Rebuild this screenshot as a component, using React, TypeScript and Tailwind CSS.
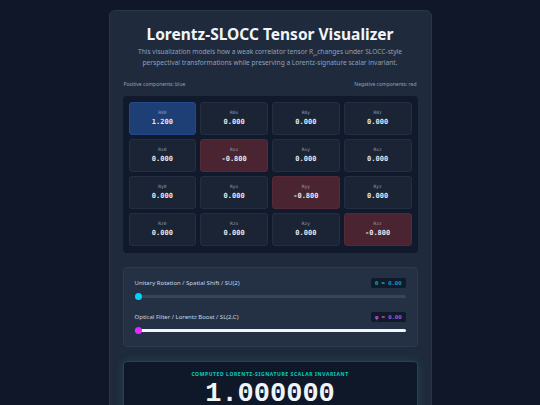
import React from 'react'

type Cell = { label: string; value: number }

const axes = ['0', 'x', 'y', 'z']

const cells: Cell[] = axes.flatMap((r, i) =>
  axes.map((c, j) => ({
    label: `R${r}${c}`,
    value: i === j ? (i === 0 ? 1.2 : -0.8) : 0,
  }))
)

function TensorCell({ label, value }: Cell) {
  const tone =
    value > 0
      ? 'bg-[#1e3f76] border-[#24498a]'
      : value < 0
        ? 'bg-[#4a2431] border-[#532a37]'
        : 'bg-[#1b2434] border-[#242e40]'
  return (
    <div className={`h-[33px] rounded-[3px] border flex flex-col items-center justify-center gap-[3px] ${tone}`}>
      <span className="text-[4.5px] leading-none text-slate-400 font-['DejaVu_Sans_Mono',monospace]">{label}</span>
      <span className="text-[7px] leading-none font-bold text-slate-200 font-['DejaVu_Sans_Mono',monospace]">
        {value.toFixed(3)}
      </span>
    </div>
  )
}

function Slider({ label, badge, badgeColor, trackColor, thumbColor }: {
  label: string
  badge: string
  badgeColor: string
  trackColor: string
  thumbColor: string
}) {
  return (
    <div className="flex flex-col gap-[5px]">
      <div className="flex items-center justify-between">
        <span className="text-[6px] text-slate-300">{label}</span>
        <span className={`h-[10px] px-[4px] rounded-[2px] bg-[#111a2b] text-[5.5px] leading-[10px] font-['DejaVu_Sans_Mono',monospace] ${badgeColor}`}>
          {badge}
        </span>
      </div>
      <div className="relative h-[7px] flex items-center">
        <div className={`w-full h-[3px] rounded-full ${trackColor}`} />
        <div className={`absolute left-0 w-[7px] h-[7px] rounded-full ${thumbColor}`} />
      </div>
    </div>
  )
}

export default function App() {
  return (
    <div className="min-h-[405px] bg-[#0f1729] flex justify-center pt-[10px] font-['Noto_Sans',sans-serif]">
      <div className="w-[323px] bg-[#1f2a3c] border border-[#2a3547] rounded-t-[6px] px-[13px] pt-[13px] pb-[13px] flex flex-col">
        <h1 className="text-[15.5px] leading-[20px] font-bold text-slate-100 text-center">
          Lorentz-SLOCC Tensor Visualizer
        </h1>
        <p className="mt-[3px] -mx-[4px] text-[6.6px] leading-[10px] text-slate-400 text-center">
          This visualization models how a weak correlator tensor R
          <span className="relative top-[2px] text-[3.5px]">μν</span>changes under SLOCC-style
          <br />
          perspectival transformations while preserving a Lorentz-signature scalar invariant.
        </p>
        <div className="mt-[13px] flex justify-between text-[5px] leading-[7px] text-slate-400 px-[1px]">
          <span>Positive components: blue</span>
          <span>Negative components: red</span>
        </div>
        <div className="mt-[8px] bg-[#111a2c] rounded-[4px] p-[6px] pb-[7px] grid grid-cols-4 gap-[4px]">
          {cells.map(c => (
            <TensorCell key={c.label} {...c} />
          ))}
        </div>

        <div className="mt-[14px] bg-[#243145] border border-[#2c394e] rounded-[4px] px-[11px] pt-[10px] pb-[12px] flex flex-col gap-[12px]">
          <Slider
            label="Unitary Rotation / Spatial Shift / SU(2)"
            badge="θ = 0.00"
            badgeColor="text-cyan-400"
            trackColor="bg-[#3d4350]"
            thumbColor="bg-cyan-400"
          />
          <Slider
            label="Optical Filter / Lorentz Boost / SL(2,C)"
            badge="φ = 0.00"
            badgeColor="text-fuchsia-400"
            trackColor="bg-slate-100"
            thumbColor="bg-fuchsia-500"
          />
        </div>

        <div className="mt-[14px] bg-[#0f1828] border border-[#1d4a47] rounded-[4px] shadow-[0_0_10px_rgba(45,212,191,0.15)] pt-[9px] pb-[10px] flex flex-col items-center">
          <span className="text-[5px] leading-[7px] font-bold tracking-[0.12em] uppercase text-teal-400">
            Computed Lorentz-Signature Scalar Invariant
          </span>
          <span className="mt-[1px] text-[27px] leading-[30px] font-bold text-slate-100 font-['Liberation_Mono',monospace]">
            1.000000
          </span>
        </div>
      </div>
    </div>
  )
}
